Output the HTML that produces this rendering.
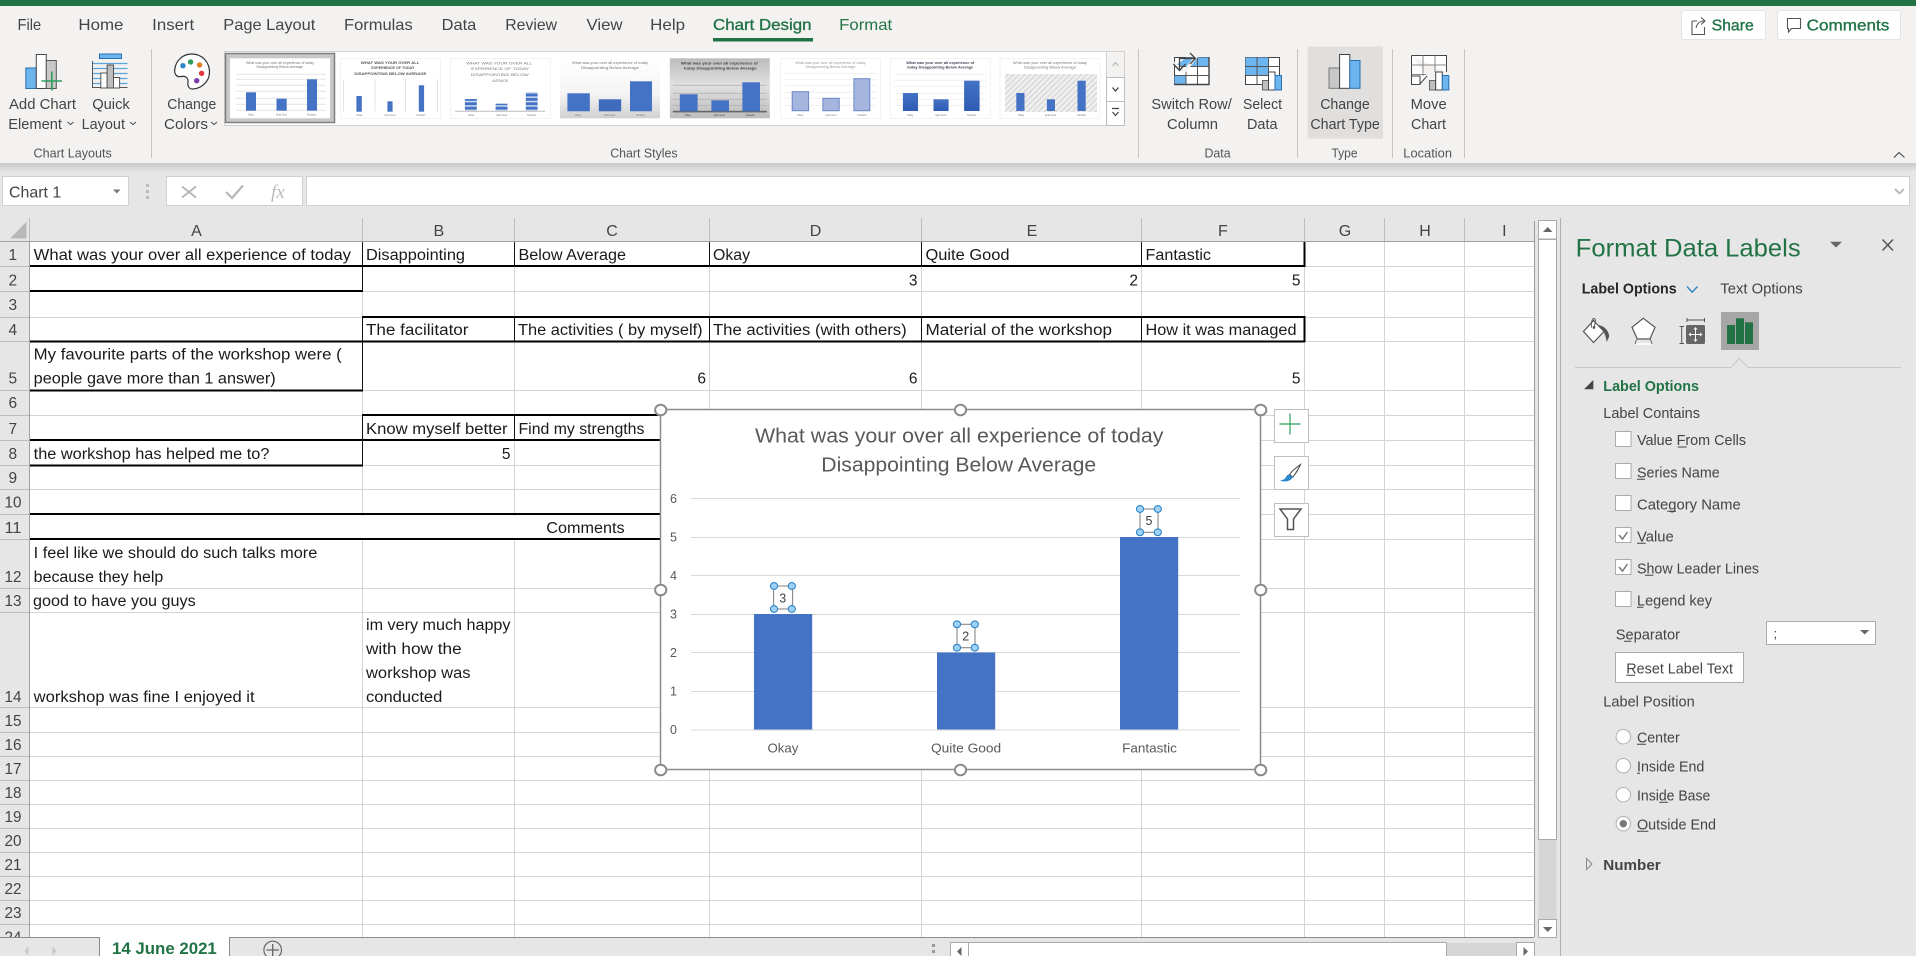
<!DOCTYPE html>
<html lang="en"><head><meta charset="utf-8"><title>Excel</title>
<style>
html,body{margin:0;padding:0;background:#e6e6e6;width:1916px;height:956px;overflow:hidden}
svg{display:block}
text{font-family:"Liberation Sans",sans-serif;white-space:pre}
.c{font-size:15.5px;fill:#1a1a1a}
.n{font-size:15.5px;fill:#444}
.h{font-size:16px;fill:#444;text-anchor:middle}
.t{font-size:16px;fill:#444}
.r{font-size:15px;fill:#444}
.g{font-size:13px;fill:#555}
.p{font-size:15px;fill:#444}
.a{font-size:12.5px;fill:#595959}
.tt{font-size:20.5px;fill:#595959}
.m{font-size:3.6px;fill:#777}
.mb{font-size:3.6px;fill:#555;font-weight:bold}
.x{font-size:3px;fill:#777}
.sb{font-size:16px;fill:#217346;stroke:#217346;stroke-width:.35px}
</style></head>
<body>
<svg xmlns="http://www.w3.org/2000/svg" width="1916" height="956" viewBox="0 0 1916 956">
<defs>
<linearGradient id="sh" x1="0" y1="0" x2="0" y2="1"><stop offset="0" stop-color="#c9c9c9"/><stop offset="1" stop-color="#e6e6e6"/></linearGradient>
<linearGradient id="g4" x1="0" y1="0" x2="0" y2="1"><stop offset="0" stop-color="#fff"/><stop offset="0.6" stop-color="#f4f4f4"/><stop offset="1" stop-color="#d0d0d0"/></linearGradient>
<linearGradient id="g5" x1="0" y1="0" x2="0" y2="1"><stop offset="0" stop-color="#bcbcbc"/><stop offset="0.45" stop-color="#e0e0e0"/><stop offset="1" stop-color="#bdbdbd"/></linearGradient>
<linearGradient id="b7" x1="0" y1="0" x2="0" y2="1"><stop offset="0" stop-color="#4472c4"/><stop offset="1" stop-color="#2f5cb3"/></linearGradient>
<pattern id="hat" width="4" height="4" patternUnits="userSpaceOnUse" patternTransform="rotate(45)"><rect width="4" height="4" fill="#f2f2f2"/><rect width="2" height="4" fill="#dcdcdc"/></pattern>
<pattern id="stp" width="4" height="4.4" patternUnits="userSpaceOnUse"><rect width="4" height="4.4" fill="#4472c4"/><rect y="2.9" width="4" height="1.5" fill="#cfdaf0"/></pattern>
</defs>

<!-- backgrounds -->
<rect width="1916" height="956" fill="#e6e6e6"/>
<rect width="1916" height="163" fill="#f3f2f1"/>
<rect width="1916" height="6" fill="#217346"/>
<rect y="163" width="1916" height="9" fill="url(#sh)"/>

<!-- tabs -->
<text class="t" x="17.5" y="30" textLength="23.7" lengthAdjust="spacingAndGlyphs">File</text>
<text class="t" x="78.4" y="30" textLength="45" lengthAdjust="spacingAndGlyphs">Home</text>
<text class="t" x="152.2" y="30" textLength="42" lengthAdjust="spacingAndGlyphs">Insert</text>
<text class="t" x="223.3" y="30" textLength="92" lengthAdjust="spacingAndGlyphs">Page Layout</text>
<text class="t" x="344" y="30" textLength="68.7" lengthAdjust="spacingAndGlyphs">Formulas</text>
<text class="t" x="441.6" y="30" textLength="34.7" lengthAdjust="spacingAndGlyphs">Data</text>
<text class="t" x="505.3" y="30" textLength="51.7" lengthAdjust="spacingAndGlyphs">Review</text>
<text class="t" x="586.5" y="30" textLength="36" lengthAdjust="spacingAndGlyphs">View</text>
<text class="t" x="650.2" y="30" textLength="34.8" lengthAdjust="spacingAndGlyphs">Help</text>
<text class="sb" x="713" y="30" textLength="98.5" lengthAdjust="spacingAndGlyphs">Chart Design</text>
<rect x="713" y="38" width="100" height="3.5" fill="#217346"/>
<text class="t" x="839.2" y="30" textLength="53" lengthAdjust="spacingAndGlyphs" style="fill:#217346">Format</text>

<!-- share / comments -->
<rect x="1681.5" y="10.5" width="84" height="29" rx="2" fill="#fff" stroke="#e6e4e2"/>
<path d="M1692 21H1697M1692 21V34.5H1704.5V27M1696 28C1697 23.5 1700 21 1704 21M1701 17.5L1705 21L1701 24.5" fill="none" stroke="#555" stroke-width="1.1"/>
<text class="sb" x="1711.6" y="30.5" textLength="42.2" lengthAdjust="spacingAndGlyphs">Share</text>
<rect x="1777.5" y="10.5" width="123" height="29" rx="2" fill="#fff" stroke="#e6e4e2"/>
<path d="M1787.5 18.5H1800.5V28.5H1791.5L1788.5 32V28.5H1787.5Z" fill="none" stroke="#555" stroke-width="1.1"/>
<text class="sb" x="1806.6" y="30.5" textLength="82.7" lengthAdjust="spacingAndGlyphs">Comments</text>

<!-- ribbon separators -->
<path d="M151.5 49V158M1138.5 49V158M1297.5 49V158M1392.5 49V158M1464.5 49V158" stroke="#c8c6c4" fill="none"/>

<!-- Add Chart Element icon -->
<rect x="25.8" y="68" width="10.5" height="20.5" fill="#6db5ee" stroke="#2a6fb0"/>
<rect x="36.3" y="54.5" width="10" height="34" fill="#fff" stroke="#444"/>
<rect x="46.3" y="60.5" width="10" height="28" fill="#c8c8c8" stroke="#555"/>
<path d="M41.5 81H62M51.8 71.5V90.5" stroke="#2f9e5b" stroke-width="1.6" fill="none"/>
<text class="r" x="9" y="109" textLength="67" lengthAdjust="spacingAndGlyphs">Add Chart</text>
<text class="r" x="8.2" y="129" textLength="53.8" lengthAdjust="spacingAndGlyphs">Element</text>
<path d="M67.5 122L70.5 124.5L73.5 122" fill="none" stroke="#555" stroke-width="1.1"/>

<!-- Quick Layout icon -->
<rect x="99.5" y="54" width="22" height="4.5" fill="#6db5ee" stroke="#2a6fb0"/>
<path d="M92.5 63.5H127.5M92.5 68.5H127.5M92.5 73.5H127.5M92.5 78.5H127.5M92.5 83.5H127.5" stroke="#5aa7df" stroke-width="1.2"/>
<path d="M92.5 61V87.5H127.5" fill="none" stroke="#555"/>
<rect x="100.8" y="73" width="6.3" height="15" fill="#fff" stroke="#555"/>
<rect x="107.1" y="65" width="6.4" height="23" fill="#bdbdbd" stroke="#555"/>
<rect x="113.5" y="77.5" width="6.1" height="10.5" fill="#fff" stroke="#555"/>
<text class="r" x="92.2" y="109" textLength="37.6" lengthAdjust="spacingAndGlyphs">Quick</text>
<text class="r" x="81.6" y="129" textLength="43.4" lengthAdjust="spacingAndGlyphs">Layout</text>
<path d="M130 122L133 124.5L136 122" fill="none" stroke="#555" stroke-width="1.1"/>
<text class="g" x="33.5" y="157.5" textLength="78.3" lengthAdjust="spacingAndGlyphs">Chart Layouts</text>

<!-- palette -->
<path d="M192 54C202 54 209.5 62 209.5 72C209.5 82 201 88.5 193 89C188.5 89.2 187.5 85.5 188 82C188.5 77.5 185 75.5 181 76.5C177 77.5 174 74.5 174.8 69C176 61 182 54 192 54Z" fill="#fff" stroke="#333" stroke-width="1.2"/>
<circle cx="182.9" cy="65.7" r="2.7" fill="#2e86c9"/><circle cx="190.6" cy="62" r="2.7" fill="#2f9e5b"/><circle cx="199.6" cy="65" r="2.7" fill="#e67e22"/><circle cx="201.6" cy="73.3" r="2.7" fill="#e0393e"/><circle cx="196.7" cy="80.7" r="2.7" fill="#7b3fa8"/>
<text class="r" x="167.3" y="109" textLength="49" lengthAdjust="spacingAndGlyphs">Change</text>
<text class="r" x="164" y="129" textLength="44" lengthAdjust="spacingAndGlyphs">Colors</text>
<path d="M211 122L214 124.5L217 122" fill="none" stroke="#555" stroke-width="1.1"/>

<!-- gallery -->
<rect x="224.5" y="51.5" width="882" height="74" fill="#fff" stroke="#d2d0ce"/>
<rect x="225.5" y="53.5" width="109" height="69" fill="#c8c8c8" stroke="#7f7f7f" stroke-width="1.5"/>

<!-- thumb 1 -->
<g transform="translate(230 58.3)"><rect width="100" height="60" fill="#fff"/>
<text class="m" x="16" y="5.5" textLength="68" lengthAdjust="spacingAndGlyphs">What was your over all experience of today</text>
<text class="m" x="26.5" y="9.8" textLength="46.5" lengthAdjust="spacingAndGlyphs">Disappointing Below Average</text>
<path d="M6 16H96M6 21H96M6 27H96M6 33H96M6 40H96M6 46H96M6 52H96" stroke="#e2e2e2" stroke-width="1"/>
<rect x="16" y="34" width="10" height="18.4" fill="#4472c4"/><rect x="46.5" y="40.4" width="10.2" height="12" fill="#4472c4"/><rect x="77" y="21" width="10" height="31.4" fill="#4472c4"/>
<text class="x" x="18" y="57" textLength="6" lengthAdjust="spacingAndGlyphs">Okay</text><text class="x" x="46" y="57" textLength="11" lengthAdjust="spacingAndGlyphs">Quite Good</text><text class="x" x="77" y="57" textLength="9" lengthAdjust="spacingAndGlyphs">Fantastic</text></g>
<!-- thumb 2 -->
<g transform="translate(340.4 58.3)"><rect width="100" height="60" fill="#fff" stroke="#e6e6e6" stroke-width=".5"/>
<text class="mb" x="20.4" y="5.5" textLength="58.6" lengthAdjust="spacingAndGlyphs">WHAT WAS YOUR OVER ALL</text>
<text class="mb" x="31" y="10.8" textLength="43" lengthAdjust="spacingAndGlyphs">EXPERIENCE OF TODAY</text>
<text class="mb" x="14" y="16.8" textLength="72" lengthAdjust="spacingAndGlyphs">DISAPPOINTING BELOW AVERAGE</text>
<path d="M3 21V53M34.5 21V53M65 21V53M97 21V53" stroke="#dcdcdc" stroke-width=".8"/>
<rect x="16" y="37.7" width="5.4" height="15.7" fill="#4472c4"/><rect x="47" y="43" width="5.2" height="10.4" fill="#4472c4"/><rect x="78.4" y="27" width="5.3" height="26.4" fill="#4472c4"/>
<text class="x" x="16" y="57.5" textLength="6" lengthAdjust="spacingAndGlyphs">Okay</text><text class="x" x="44" y="57.5" textLength="11" lengthAdjust="spacingAndGlyphs">Quite Good</text><text class="x" x="76" y="57.5" textLength="9" lengthAdjust="spacingAndGlyphs">Fantastic</text></g>
<!-- thumb 3 -->
<g transform="translate(450.2 58.3)"><rect width="100" height="60" fill="#fff" stroke="#e6e6e6" stroke-width=".5"/>
<text class="m" x="16" y="6" textLength="66" lengthAdjust="spacingAndGlyphs">WHAT WAS YOUR OVER ALL</text>
<text class="m" x="21" y="11.7" textLength="58" lengthAdjust="spacingAndGlyphs">EXPERIENCE OF TODAY</text>
<text class="m" x="20.5" y="17.7" textLength="58" lengthAdjust="spacingAndGlyphs">DISAPPOINTING BELOW</text>
<text class="m" x="42" y="23.7" textLength="16" lengthAdjust="spacingAndGlyphs">AVERAGE</text>
<rect x="14.7" y="40.7" width="11.9" height="12" fill="url(#stp)"/><rect x="45.4" y="45.4" width="11.9" height="7.3" fill="url(#stp)"/><rect x="75.6" y="33.7" width="11.8" height="19" fill="url(#stp)"/>
<path d="M5 53H95" stroke="#bbb" stroke-width="1"/>
<text class="x" x="18" y="57.5" textLength="6" lengthAdjust="spacingAndGlyphs">Okay</text><text class="x" x="46" y="57.5" textLength="11" lengthAdjust="spacingAndGlyphs">Quite Good</text><text class="x" x="77" y="57.5" textLength="9" lengthAdjust="spacingAndGlyphs">Fantastic</text></g>
<!-- thumb 4 -->
<g transform="translate(560 58.3)"><rect width="100" height="60" fill="url(#g4)"/>
<text class="m" x="12" y="5.5" textLength="76" lengthAdjust="spacingAndGlyphs">What was your over all experience of today</text>
<text class="m" x="21" y="10.5" textLength="58" lengthAdjust="spacingAndGlyphs">Disappointing Below Average</text>
<rect x="7.4" y="35" width="22.4" height="18" fill="#4472c4"/><rect x="38.8" y="41" width="22.4" height="12" fill="#3f6bbd"/><rect x="70" y="23" width="22" height="30" fill="#4472c4"/>
<text class="x" x="15" y="57.5" textLength="6" lengthAdjust="spacingAndGlyphs">Okay</text><text class="x" x="44" y="57.5" textLength="11" lengthAdjust="spacingAndGlyphs">Quite Good</text><text class="x" x="76" y="57.5" textLength="9" lengthAdjust="spacingAndGlyphs">Fantastic</text></g>
<!-- thumb 5 -->
<g transform="translate(669.8 58.3)"><rect width="100" height="60" fill="url(#g5)"/>
<text class="mb" x="11" y="6" textLength="77" lengthAdjust="spacingAndGlyphs" style="fill:#444">What was your over all experience of</text>
<text class="mb" x="14" y="11" textLength="73" lengthAdjust="spacingAndGlyphs" style="fill:#444">today Disappointing Below Average</text>
<path d="M3 27H97M3 35H97M3 41H97M3 47H97" stroke="#b4b4b4" stroke-width=".8"/>
<rect x="3" y="52.5" width="94" height="1.6" fill="#666"/>
<rect x="10" y="36" width="17.8" height="17" fill="#4472c4"/><rect x="41.6" y="42" width="17.6" height="11" fill="#4472c4"/><rect x="72.6" y="24" width="17.6" height="29" fill="#4472c4"/>
<text class="x" x="15" y="57.5" textLength="6" lengthAdjust="spacingAndGlyphs" style="fill:#444">Okay</text><text class="x" x="44" y="57.5" textLength="11" lengthAdjust="spacingAndGlyphs" style="fill:#444">Quite Good</text><text class="x" x="76" y="57.5" textLength="9" lengthAdjust="spacingAndGlyphs" style="fill:#444">Fantastic</text></g>
<!-- thumb 6 -->
<g transform="translate(780.4 58.3)"><rect width="100" height="60" fill="#fff" stroke="#e6e6e6" stroke-width=".5"/>
<text class="m" x="15" y="5.5" textLength="70" lengthAdjust="spacingAndGlyphs" style="fill:#999">What was your over all experience of today</text>
<text class="m" x="25" y="9.8" textLength="50" lengthAdjust="spacingAndGlyphs" style="fill:#999">Disappointing Below Average</text>
<path d="M4 15H96M4 21H96M4 27H96M4 34H96M4 40H96M4 47H96" stroke="#eee" stroke-width=".8"/>
<rect x="11.8" y="33.4" width="16.4" height="19" fill="#a5b6de" stroke="#6a86c7" stroke-width="1"/><rect x="42.5" y="40" width="16.3" height="12.4" fill="#a5b6de" stroke="#6a86c7" stroke-width="1"/><rect x="73.5" y="20.4" width="15.9" height="32" fill="#a5b6de" stroke="#6a86c7" stroke-width="1"/>
<text class="x" x="17" y="57.5" textLength="6" lengthAdjust="spacingAndGlyphs">Okay</text><text class="x" x="45" y="57.5" textLength="11" lengthAdjust="spacingAndGlyphs">Quite Good</text><text class="x" x="77" y="57.5" textLength="9" lengthAdjust="spacingAndGlyphs">Fantastic</text></g>
<!-- thumb 7 -->
<g transform="translate(890.2 58.3)"><rect width="100" height="60" fill="#fff" stroke="#e6e6e6" stroke-width=".5"/>
<text class="mb" x="16" y="5.5" textLength="68" lengthAdjust="spacingAndGlyphs" style="fill:#445">What was your over all experience of</text>
<text class="mb" x="17" y="10" textLength="66" lengthAdjust="spacingAndGlyphs" style="fill:#445">today Disappointing Below Average</text>
<path d="M4 16H96M4 22H96M4 28H96M4 35H96M4 41H96M4 47H96" stroke="#eee" stroke-width=".8"/>
<rect x="12.7" y="34.7" width="15.1" height="18" fill="url(#b7)"/><rect x="43.3" y="41" width="15.1" height="11.7" fill="url(#b7)"/><rect x="73.9" y="22.4" width="15.5" height="30.3" fill="url(#b7)"/>
<text class="x" x="17" y="57.5" textLength="6" lengthAdjust="spacingAndGlyphs">Okay</text><text class="x" x="45" y="57.5" textLength="11" lengthAdjust="spacingAndGlyphs">Quite Good</text><text class="x" x="77" y="57.5" textLength="9" lengthAdjust="spacingAndGlyphs">Fantastic</text></g>
<!-- thumb 8 -->
<g transform="translate(1000 58.3)"><rect width="100" height="60" fill="#fff" stroke="#e6e6e6" stroke-width=".5"/>
<text class="m" x="13" y="5.5" textLength="74" lengthAdjust="spacingAndGlyphs">What was your over all experience of today</text>
<text class="m" x="24" y="10" textLength="52" lengthAdjust="spacingAndGlyphs">Disappointing Below Average</text>
<rect x="5" y="15.7" width="92" height="38" fill="url(#hat)"/>
<rect x="16.3" y="34.7" width="8.2" height="18" fill="#4472c4"/><rect x="46.9" y="41" width="8.1" height="11.7" fill="#4472c4"/><rect x="77.5" y="22.4" width="8.2" height="30.3" fill="#4472c4"/>
<text class="x" x="18" y="57.5" textLength="6" lengthAdjust="spacingAndGlyphs">Okay</text><text class="x" x="45" y="57.5" textLength="11" lengthAdjust="spacingAndGlyphs">Quite Good</text><text class="x" x="77" y="57.5" textLength="9" lengthAdjust="spacingAndGlyphs">Fantastic</text></g>

<!-- gallery scroll -->
<rect x="1106.5" y="51.5" width="18" height="26" fill="#f3f2f1" stroke="#d2d0ce"/>
<rect x="1106.5" y="77.5" width="18" height="24" fill="#fff" stroke="#bdbdbd"/>
<rect x="1106.5" y="101.5" width="18" height="24" fill="#fff" stroke="#bdbdbd"/>
<path d="M1112.5 66L1115.5 62.5L1118.5 66" fill="none" stroke="#bbb" stroke-width="1.3"/>
<path d="M1112.5 87.5L1115.5 91L1118.5 87.5" fill="none" stroke="#444" stroke-width="1.3"/>
<path d="M1112 108.5H1119M1112.5 112L1115.5 115.5L1118.5 112" fill="none" stroke="#444" stroke-width="1.2"/>
<text class="g" x="610.2" y="157.5" textLength="67.4" lengthAdjust="spacingAndGlyphs">Chart Styles</text>

<!-- switch row/column -->
<rect x="1174.5" y="57.5" width="34.5" height="27" fill="#fff" stroke="#444"/>
<path d="M1186 57.5H1209V66.5H1174.5Z" fill="#6db5ee"/>
<rect x="1174.5" y="75.5" width="11.5" height="9" fill="#6db5ee"/>
<path d="M1174.5 66.5H1209M1174.5 75.5H1209M1186 66.5V84.5M1197.5 57.5V84.5" stroke="#555" fill="none"/>
<path d="M1174.5 84.5H1209V57.5" stroke="#444" fill="none" stroke-width="1.4"/>
<path d="M1172 62L1184 72L1200 52" fill="none" stroke="#f3f2f1" stroke-width="3.2"/>
<path d="M1179.5 70V58.5H1194.5M1190 53L1195.5 58.5L1190 64M1173.5 64L1179.5 70.5L1185.5 64" fill="none" stroke="#444" stroke-width="1.3"/>
<text class="r" x="1151.4" y="109" textLength="80.4" lengthAdjust="spacingAndGlyphs">Switch Row/</text>
<text class="r" x="1167" y="129" textLength="51" lengthAdjust="spacingAndGlyphs">Column</text>

<!-- select data -->
<rect x="1245.5" y="57.5" width="34" height="27" fill="#fff" stroke="#444"/>
<rect x="1245.5" y="57.5" width="23" height="18" fill="#6db5ee"/>
<path d="M1245.5 66.5H1279.5M1245.5 75.5H1279.5M1257 57.5V84.5M1268.5 57.5V84.5" stroke="#555" fill="none"/>
<rect x="1262.5" y="80.5" width="6" height="9.5" fill="#c0c0c0" stroke="#666"/>
<rect x="1268.5" y="72" width="6.5" height="18" fill="#fff" stroke="#444"/>
<rect x="1275" y="75.5" width="6.5" height="14.5" fill="#6db5ee" stroke="#2a6fb0"/>
<text class="r" x="1243" y="109" textLength="39" lengthAdjust="spacingAndGlyphs">Select</text>
<text class="r" x="1247" y="129" textLength="30.5" lengthAdjust="spacingAndGlyphs">Data</text>
<text class="g" x="1204.5" y="157.5" textLength="26.1" lengthAdjust="spacingAndGlyphs">Data</text>

<!-- change chart type -->
<rect x="1307.5" y="46.5" width="75.5" height="92" fill="#e1dfdd"/>
<rect x="1329" y="68" width="10.6" height="20.3" fill="#c8c8c8" stroke="#777"/>
<rect x="1339.6" y="54.5" width="10.2" height="33.8" fill="#fff" stroke="#444"/>
<rect x="1349.8" y="60.5" width="10.2" height="27.8" fill="#6db5ee" stroke="#2a6fb0"/>
<text class="r" x="1320.2" y="109" textLength="49.5" lengthAdjust="spacingAndGlyphs">Change</text>
<text class="r" x="1310.4" y="129" textLength="69.4" lengthAdjust="spacingAndGlyphs">Chart Type</text>
<text class="g" x="1331.5" y="157.5" textLength="26" lengthAdjust="spacingAndGlyphs">Type</text>

<!-- move chart -->
<path d="M1411.5 55.5H1446.5V72M1411.5 55.5V84.5H1419.5L1427 76" fill="#fff" stroke="#444"/>
<path d="M1411.5 65H1446.5M1411.5 74.5H1426M1423 55.5V76M1435 55.5V72" stroke="#888" fill="none"/>
<path d="M1411.5 76H1420V85" fill="none" stroke="#444"/>
<rect x="1429.5" y="80.5" width="6.2" height="9.5" fill="#c0c0c0" stroke="#666"/>
<rect x="1435.7" y="72" width="6.6" height="18" fill="#fff" stroke="#444"/>
<rect x="1442.3" y="75.5" width="6.5" height="14.5" fill="#6db5ee" stroke="#2a6fb0"/>
<text class="r" x="1410.6" y="109" textLength="36.1" lengthAdjust="spacingAndGlyphs">Move</text>
<text class="r" x="1411" y="129" textLength="35" lengthAdjust="spacingAndGlyphs">Chart</text>
<text class="g" x="1403.3" y="157.5" textLength="48.7" lengthAdjust="spacingAndGlyphs">Location</text>
<path d="M1894 157.5L1899 152.5L1904.5 157.5" fill="none" stroke="#444" stroke-width="1.1"/>

<!-- formula bar -->
<rect x="2.5" y="176.5" width="126" height="29" fill="#fff" stroke="#d2d0ce"/>
<text x="9" y="197.3" textLength="52.2" lengthAdjust="spacingAndGlyphs" style="font-size:16px;fill:#444">Chart 1</text>
<path d="M113 189.5H120.5L116.8 193.5Z" fill="#777"/>
<rect x="146" y="184" width="3" height="3" fill="#bbb"/><rect x="146" y="190" width="3" height="3" fill="#bbb"/><rect x="146" y="196" width="3" height="3" fill="#bbb"/>
<rect x="166.5" y="176.5" width="136" height="29" fill="#fff" stroke="#d2d0ce"/>
<path d="M182 186.5L196 197.5M196 186.5L182 197.5" stroke="#b8b8b8" stroke-width="2"/>
<path d="M226 192L232 198L243 185.5" fill="none" stroke="#b8b8b8" stroke-width="2.2"/>
<text x="271" y="198" style="font-family:'Liberation Serif',serif;font-style:italic;font-size:19px;fill:#bbb">fx</text>
<rect x="306.5" y="176.5" width="1603" height="29" fill="#fff" stroke="#d2d0ce"/>
<path d="M1895 189L1899.5 193.5L1904 189" fill="none" stroke="#bbb" stroke-width="2"/>

<!-- column header -->
<path d="M10 238.5L26.5 221.7V238.5Z" fill="#b8b8b8"/>
<path d="M29.5 218V242M362.5 218V242M514.5 218V242M709.5 218V242M921.5 218V242M1141.5 218V242M1304.5 218V242M1384.5 218V242M1464.5 218V242" stroke="#bdbdbd" fill="none"/>
<text class="h" x="196.5" y="236">A</text><text class="h" x="438.8" y="236">B</text><text class="h" x="612" y="236">C</text><text class="h" x="815.5" y="236">D</text><text class="h" x="1032" y="236">E</text><text class="h" x="1222.9" y="236">F</text><text class="h" x="1345" y="236">G</text><text class="h" x="1425" y="236">H</text><text class="h" x="1504.3" y="236">I</text>

<!-- sheet -->
<rect x="30" y="242" width="1504" height="695" fill="#fff"/>
<path d="M0 266.5H30M0 291.5H30M0 317.5H30M0 341.5H30M0 390.5H30M0 415.5H30M0 440.5H30M0 465.5H30M0 489.5H30M0 514.5H30M0 539.5H30M0 588.5H30M0 612.5H30M0 707.5H30M0 732.5H30M0 756.5H30M0 780.5H30M0 804.5H30M0 828.5H30M0 852.5H30M0 876.5H30M0 900.5H30M0 924.5H30" stroke="#bdbdbd" fill="none"/>
<path d="M29.5 242V937M0 241.5H1534" stroke="#a0a0a0" fill="none"/>
<path d="M30 266.5H1534M30 291.5H1534M30 317.5H1534M30 341.5H1534M30 390.5H1534M30 415.5H1534M30 440.5H1534M30 465.5H1534M30 489.5H1534M30 514.5H1534M30 539.5H1534M30 588.5H1534M30 612.5H1534M30 707.5H1534M30 732.5H1534M30 756.5H1534M30 780.5H1534M30 804.5H1534M30 828.5H1534M30 852.5H1534M30 876.5H1534M30 900.5H1534M30 924.5H1534" stroke="#d4d4d4" fill="none"/>
<path d="M362.5 242V937M514.5 242V937M709.5 242V937M921.5 242V937M1141.5 242V937M1304.5 242V937M1384.5 242V937M1464.5 242V937" stroke="#d4d4d4" fill="none"/>
<rect x="31" y="516" width="630" height="22" fill="#fff"/>
<path d="M1534.5 221V937" stroke="#9a9a9a"/>

<!-- heavy borders -->
<path d="M30 266H1305M30 291H363
M362 317H1305M30 341.5H1305M30 390.5H363
M362 415H660M30 440H660M30 465.5H363
M30 514H660M30 539H660
M1304.5 242V267M1304.5 316V342" stroke="#000" stroke-width="2" fill="none"/>
<path d="M362.5 242V291M514.5 242V266M709.5 242V266M921.5 242V266M1141.5 242V266
M362.5 317V391M514.5 317V341M709.5 317V341M921.5 317V341M1141.5 317V341
M362.5 415V466M514.5 415V440" stroke="#111" stroke-width="1" fill="none"/>

<!-- row numbers -->
<text class="n" x="8.5" y="260">1</text><text class="n" x="8.5" y="285.5">2</text><text class="n" x="8.5" y="310">3</text><text class="n" x="8.5" y="335">4</text><text class="n" x="8.5" y="383.5">5</text><text class="n" x="8.5" y="408">6</text><text class="n" x="8.5" y="434">7</text><text class="n" x="8.5" y="459">8</text><text class="n" x="8.5" y="483">9</text>
<text class="n" x="4.5" y="507.5" textLength="17" lengthAdjust="spacingAndGlyphs">10</text>
<text class="n" x="4.5" y="533" textLength="17" lengthAdjust="spacingAndGlyphs">11</text>
<text class="n" x="4.5" y="582" textLength="17" lengthAdjust="spacingAndGlyphs">12</text>
<text class="n" x="4.5" y="606" textLength="17" lengthAdjust="spacingAndGlyphs">13</text>
<text class="n" x="4.5" y="702" textLength="17" lengthAdjust="spacingAndGlyphs">14</text>
<text class="n" x="4.5" y="726" textLength="17" lengthAdjust="spacingAndGlyphs">15</text>
<text class="n" x="4.5" y="750" textLength="17" lengthAdjust="spacingAndGlyphs">16</text>
<text class="n" x="4.5" y="774" textLength="17" lengthAdjust="spacingAndGlyphs">17</text>
<text class="n" x="4.5" y="798" textLength="17" lengthAdjust="spacingAndGlyphs">18</text>
<text class="n" x="4.5" y="822" textLength="17" lengthAdjust="spacingAndGlyphs">19</text>
<text class="n" x="4.5" y="846" textLength="17" lengthAdjust="spacingAndGlyphs">20</text>
<text class="n" x="4.5" y="870" textLength="17" lengthAdjust="spacingAndGlyphs">21</text>
<text class="n" x="4.5" y="894" textLength="17" lengthAdjust="spacingAndGlyphs">22</text>
<text class="n" x="4.5" y="918" textLength="17" lengthAdjust="spacingAndGlyphs">23</text>
<text class="n" x="4.5" y="942.5" textLength="17" lengthAdjust="spacingAndGlyphs">24</text>

<!-- cell text -->
<text class="c" x="33.7" y="260" textLength="317.3" lengthAdjust="spacingAndGlyphs">What was your over all experience of today</text>
<text class="c" x="366" y="260" textLength="99" lengthAdjust="spacingAndGlyphs">Disappointing</text>
<text class="c" x="518.5" y="260" textLength="107.5" lengthAdjust="spacingAndGlyphs">Below Average</text>
<text class="c" x="713" y="260" textLength="37" lengthAdjust="spacingAndGlyphs">Okay</text>
<text class="c" x="925.5" y="260" textLength="84" lengthAdjust="spacingAndGlyphs">Quite Good</text>
<text class="c" x="1145.5" y="260" textLength="65.5" lengthAdjust="spacingAndGlyphs">Fantastic</text>
<text class="c" x="917.5" y="285.5" text-anchor="end">3</text>
<text class="c" x="1138" y="285.5" text-anchor="end">2</text>
<text class="c" x="1300.5" y="285.5" text-anchor="end">5</text>
<text class="c" x="366" y="335" textLength="102.5" lengthAdjust="spacingAndGlyphs">The facilitator</text>
<text class="c" x="518" y="335" textLength="184.6" lengthAdjust="spacingAndGlyphs">The activities ( by myself)</text>
<text class="c" x="713" y="335" textLength="193.7" lengthAdjust="spacingAndGlyphs">The activities (with others)</text>
<text class="c" x="925.5" y="335" textLength="186.5" lengthAdjust="spacingAndGlyphs">Material of the workshop</text>
<text class="c" x="1145.5" y="335" textLength="151" lengthAdjust="spacingAndGlyphs">How it was managed</text>
<text class="c" x="33.7" y="359.5" textLength="308" lengthAdjust="spacingAndGlyphs">My favourite parts of the workshop were (</text>
<text class="c" x="33.7" y="383.5" textLength="242" lengthAdjust="spacingAndGlyphs">people gave more than 1 answer)</text>
<text class="c" x="706" y="383.5" text-anchor="end">6</text>
<text class="c" x="917.5" y="383.5" text-anchor="end">6</text>
<text class="c" x="1300.5" y="383.5" text-anchor="end">5</text>
<text class="c" x="366" y="434" textLength="141.6" lengthAdjust="spacingAndGlyphs">Know myself better</text>
<text class="c" x="518.5" y="434" textLength="125.9" lengthAdjust="spacingAndGlyphs">Find my strengths</text>
<text class="c" x="33.7" y="459" textLength="235.7" lengthAdjust="spacingAndGlyphs">the workshop has helped me to?</text>
<text class="c" x="510.5" y="459" text-anchor="end">5</text>
<text class="c" x="546.3" y="533" textLength="78.3" lengthAdjust="spacingAndGlyphs">Comments</text>
<text class="c" x="33.7" y="558" textLength="283.6" lengthAdjust="spacingAndGlyphs">I feel like we should do such talks more</text>
<text class="c" x="33.7" y="582" textLength="129.6" lengthAdjust="spacingAndGlyphs">because they help</text>
<text class="c" x="33" y="606" textLength="162.7" lengthAdjust="spacingAndGlyphs">good to have you guys</text>
<text class="c" x="366" y="630" textLength="144.5" lengthAdjust="spacingAndGlyphs">im very much happy</text>
<text class="c" x="366" y="654" textLength="95.7" lengthAdjust="spacingAndGlyphs">with how the</text>
<text class="c" x="366" y="678" textLength="104.5" lengthAdjust="spacingAndGlyphs">workshop was</text>
<text class="c" x="366" y="702" textLength="76.3" lengthAdjust="spacingAndGlyphs">conducted</text>
<text class="c" x="33.7" y="702" textLength="220.9" lengthAdjust="spacingAndGlyphs">workshop was fine I enjoyed it</text>

<!-- chart -->
<rect x="660.5" y="409.5" width="600" height="360" fill="#fff" stroke="#8c8c8c" stroke-width="1.5"/>
<text class="tt" x="755" y="442.7" textLength="408.4" lengthAdjust="spacingAndGlyphs">What was your over all experience of today</text>
<text class="tt" x="821.3" y="471.7" textLength="274.9" lengthAdjust="spacingAndGlyphs">Disappointing Below Average</text>
<path d="M691 498.5H1240.5M691 537.5H1240.5M691 575.5H1240.5M691 614.5H1240.5M691 652.5H1240.5M691 691.5H1240.5M691 730H1240.5" stroke="#d9d9d9" fill="none"/>
<text class="a" x="673.5" y="503" text-anchor="middle">6</text><text class="a" x="673.5" y="541.5" text-anchor="middle">5</text><text class="a" x="673.5" y="580" text-anchor="middle">4</text><text class="a" x="673.5" y="618.5" text-anchor="middle">3</text><text class="a" x="673.5" y="657" text-anchor="middle">2</text><text class="a" x="673.5" y="695.5" text-anchor="middle">1</text><text class="a" x="673.5" y="734" text-anchor="middle">0</text>
<rect x="754" y="614" width="58.2" height="115.5" fill="#4472c4"/>
<rect x="937" y="652.5" width="58.2" height="77" fill="#4472c4"/>
<rect x="1120" y="537" width="58.2" height="192.5" fill="#4472c4"/>
<text class="a" x="767.5" y="752.7" textLength="30.8" lengthAdjust="spacingAndGlyphs">Okay</text>
<text class="a" x="931" y="752.7" textLength="70.2" lengthAdjust="spacingAndGlyphs">Quite Good</text>
<text class="a" x="1122.2" y="752.7" textLength="54.7" lengthAdjust="spacingAndGlyphs">Fantastic</text>

<!-- data labels -->
<g fill="#9fd0f5" stroke="#2e86c9" stroke-width="1.1">
<rect x="773.6" y="586" width="19" height="23" fill="#fff" stroke="#888"/>
<rect x="957" y="624.3" width="18" height="23.4" fill="#fff" stroke="#888"/>
<rect x="1140" y="509" width="18" height="23.3" fill="#fff" stroke="#888"/>
<ellipse cx="774" cy="586" rx="3.6" ry="3.4"/><ellipse cx="791.8" cy="586" rx="3.6" ry="3.4"/><ellipse cx="774" cy="609" rx="3.6" ry="3.4"/><ellipse cx="791.8" cy="609" rx="3.6" ry="3.4"/>
<ellipse cx="957" cy="624.3" rx="3.6" ry="3.4"/><ellipse cx="974.8" cy="624.3" rx="3.6" ry="3.4"/><ellipse cx="957" cy="647.7" rx="3.6" ry="3.4"/><ellipse cx="974.8" cy="647.7" rx="3.6" ry="3.4"/>
<ellipse cx="1140" cy="509" rx="3.6" ry="3.4"/><ellipse cx="1157.8" cy="509" rx="3.6" ry="3.4"/><ellipse cx="1140" cy="532.3" rx="3.6" ry="3.4"/><ellipse cx="1157.8" cy="532.3" rx="3.6" ry="3.4"/>
</g>
<text class="a" x="782.7" y="602.3" text-anchor="middle" style="fill:#404040">3</text>
<text class="a" x="965.7" y="640.7" text-anchor="middle" style="fill:#404040">2</text>
<text class="a" x="1149" y="525" text-anchor="middle" style="fill:#404040">5</text>

<!-- chart handles -->
<g fill="#fff" stroke="#8c8c8c" stroke-width="2">
<ellipse cx="660.7" cy="410" rx="5.6" ry="5.3"/><ellipse cx="960.5" cy="410" rx="5.6" ry="5.3"/><ellipse cx="1260.7" cy="410" rx="5.6" ry="5.3"/>
<ellipse cx="660.7" cy="590" rx="5.6" ry="5.3"/><ellipse cx="1260.7" cy="590" rx="5.6" ry="5.3"/>
<ellipse cx="660.7" cy="770" rx="5.6" ry="5.3"/><ellipse cx="960.5" cy="770" rx="5.6" ry="5.3"/><ellipse cx="1260.7" cy="770" rx="5.6" ry="5.3"/>
</g>

<!-- chart side buttons -->
<rect x="1274.5" y="409.5" width="34" height="33" fill="#fff" stroke="#bfbfbf"/>
<rect x="1274.5" y="456.5" width="34" height="33" fill="#fff" stroke="#bfbfbf"/>
<rect x="1274.5" y="503.5" width="34" height="33" fill="#fff" stroke="#bfbfbf"/>
<path d="M1279.5 424H1300.5M1290 413.5V434.5" stroke="#2f9e5b" stroke-width="1.2" fill="none"/>
<path d="M1300.5 464.5C1297 467 1292 471 1289.5 474.5L1293 477C1296 473 1299 468 1300.5 464.5Z" fill="#fff" stroke="#444"/>
<path d="M1289 474.5C1286 475 1286 478 1284.5 479C1282.5 480 1281 480.3 1280 480.5C1283 482 1289 482 1292 478.5L1293 477Z" fill="#2e86c9"/>
<path d="M1280 509H1301L1293.5 519V529.5H1287.5V519Z" fill="#fff" stroke="#555" stroke-width="1.5"/>

<!-- tab bar -->
<rect x="0" y="937" width="1534" height="19" fill="#e6e6e6"/>
<path d="M0 937.5H1534" stroke="#8c8c8c"/>
<rect x="99.5" y="937" width="130" height="20" fill="#fff"/>
<path d="M99.5 937V956M229.5 937V956" stroke="#8c8c8c"/>
<text x="112" y="954" textLength="104.8" lengthAdjust="spacingAndGlyphs" style="font-size:16.5px;font-weight:bold;fill:#217346">14 June 2021</text>
<circle cx="272.7" cy="950" r="8.8" fill="none" stroke="#666" stroke-width="1.2"/>
<path d="M266.5 950H279M272.7 944V956" stroke="#666" stroke-width="1.3"/>
<path d="M28.5 946.5L24.5 951L28.5 955.5Z" fill="#c8c8c8"/><path d="M52.5 946.5L56.5 951L52.5 955.5Z" fill="#c8c8c8"/>
<rect x="932" y="944" width="3" height="3" fill="#999"/><rect x="932" y="950" width="3" height="3" fill="#999"/>

<!-- horizontal scroll -->
<rect x="950.5" y="942.5" width="18" height="14" fill="#fff" stroke="#aaa"/>
<path d="M961.5 947V956L957 951.5Z" fill="#666"/>
<rect x="968.5" y="942.5" width="478" height="14" fill="#fff" stroke="#aaa"/>
<rect x="1447" y="943" width="70" height="13" fill="#d6d6d6"/>
<rect x="1516.5" y="942.5" width="18" height="14" fill="#fff" stroke="#aaa"/>
<path d="M1523.5 947V956L1528 951.5Z" fill="#666"/>

<!-- vertical scroll -->
<rect x="1538.5" y="239" width="18" height="680" fill="#d6d6d6"/>
<rect x="1538.5" y="220.5" width="18" height="18.5" fill="#fff" stroke="#aaa"/>
<path d="M1543 232H1552.5L1547.7 227Z" fill="#666"/>
<rect x="1538.5" y="239.5" width="18" height="600" fill="#fff" stroke="#aaa"/>
<rect x="1538.5" y="919.5" width="18" height="18" fill="#fff" stroke="#aaa"/>
<path d="M1543 927H1552.5L1547.7 932Z" fill="#666"/>
<path d="M1560.5 218V956" stroke="#b0b0b0"/>

<!-- format panel -->
<text x="1575.7" y="256.7" textLength="225" lengthAdjust="spacingAndGlyphs" style="font-size:25px;fill:#217346">Format Data Labels</text>
<path d="M1830 241.7H1842L1836 247.5Z" fill="#666"/>
<path d="M1882.5 239.5L1893 250.5M1893 239.5L1882.5 250.5" stroke="#555" stroke-width="1.5"/>
<text class="p" x="1581.7" y="293.3" textLength="95" lengthAdjust="spacingAndGlyphs" style="font-weight:bold;fill:#262626">Label Options</text>
<path d="M1687 286.5L1692.2 292.2L1697.5 286.5" fill="none" stroke="#2e86c9" stroke-width="1.4"/>
<text class="p" x="1720.3" y="293.3" textLength="82.4" lengthAdjust="spacingAndGlyphs">Text Options</text>

<!-- fill icon -->
<path d="M1593.5 320.5L1604 331.5L1593.5 342.5L1583.5 331.5Z" fill="#fff" stroke="#555" stroke-width="1.2"/>
<path d="M1598.5 325C1604 326 1608 329.5 1609.3 336C1608.5 338 1608 340 1606.5 342C1606.5 338 1605 335 1603.5 331.5Z" fill="#555"/>
<path d="M1591.5 327.5C1591 323 1592 318.5 1594 318.5C1596 318.5 1595.5 323 1594 327.5" fill="none" stroke="#555"/>
<circle cx="1594" cy="327.5" r="1.4" fill="#555"/>
<!-- pentagon icon -->
<path d="M1643.3 318.3L1655 327.3L1650 339H1637.3L1632 327.3Z" fill="#fff" stroke="#555" stroke-width="1.2"/>
<path d="M1636.5 339.5L1635 344M1650.5 339.5L1652 344" stroke="#666"/>
<path d="M1636 344H1651" stroke="#fff" stroke-width="1.5"/>
<!-- size icon -->
<path d="M1687 318V322M1687 320H1704.5M1704.5 318V322M1681.7 326.5V343.5M1679.5 326.5H1684M1679.5 343.5H1684" stroke="#555" fill="none"/>
<rect x="1686" y="325" width="19" height="19" rx="1.5" fill="#666"/>
<path d="M1695.5 328V341M1689.5 334.5H1701.5" stroke="#fff"/>
<path d="M1695.5 327L1693.5 329.5H1697.5ZM1695.5 342L1693.5 339.5H1697.5ZM1688.5 334.5L1691 332.5V336.5ZM1702.5 334.5L1700 332.5V336.5Z" fill="#fff"/>
<!-- active tile -->
<rect x="1721" y="312" width="38" height="38" fill="#a6a6a6"/>
<rect x="1727" y="325" width="8" height="19" fill="#217346"/><rect x="1736" y="318.3" width="8" height="25.7" fill="#217346"/><rect x="1745" y="322.3" width="8" height="21.7" fill="#217346"/>
<path d="M1575 367.5H1731L1739.3 358.5L1748 367.5H1901" fill="none" stroke="#c8c8c8"/>

<path d="M1593.3 380V389.3H1584Z" fill="#444"/>
<text class="p" x="1603.3" y="391" textLength="95.7" lengthAdjust="spacingAndGlyphs" style="font-weight:bold;fill:#217346">Label Options</text>
<text class="p" x="1603.3" y="418" textLength="96.7" lengthAdjust="spacingAndGlyphs">Label Contains</text>

<g fill="#fff" stroke="#ababab">
<rect x="1615.5" y="431.5" width="15.5" height="15"/><rect x="1615.5" y="463.5" width="15.5" height="15"/><rect x="1615.5" y="495.5" width="15.5" height="15"/><rect x="1615.5" y="527.5" width="15.5" height="15"/><rect x="1615.5" y="559.5" width="15.5" height="15"/><rect x="1615.5" y="591.5" width="15.5" height="15"/>
</g>
<path d="M1619 535L1622.5 539L1627.5 532M1619 567L1622.5 571L1627.5 564" fill="none" stroke="#777" stroke-width="1.5"/>
<text class="p" x="1637" y="445" textLength="109" lengthAdjust="spacingAndGlyphs">Value From Cells</text>
<text class="p" x="1637" y="477.3" textLength="82.7" lengthAdjust="spacingAndGlyphs">Series Name</text>
<text class="p" x="1637" y="509.3" textLength="103.7" lengthAdjust="spacingAndGlyphs">Category Name</text>
<text class="p" x="1637" y="541.3" textLength="36.7" lengthAdjust="spacingAndGlyphs">Value</text>
<text class="p" x="1637" y="573.3" textLength="122" lengthAdjust="spacingAndGlyphs">Show Leader Lines</text>
<text class="p" x="1637" y="605.3" textLength="75" lengthAdjust="spacingAndGlyphs">Legend key</text>
<text class="p" x="1615.7" y="639.3" textLength="64.3" lengthAdjust="spacingAndGlyphs">Separator</text>
<rect x="1766.5" y="621.5" width="109" height="23" fill="#fff" stroke="#ababab"/>
<text class="p" x="1773.5" y="638" style="font-size:13px">;</text>
<path d="M1860 630H1869.3L1864.7 634.5Z" fill="#666"/>
<rect x="1615.5" y="652.5" width="128" height="30" fill="#fff" stroke="#ababab"/>
<text class="p" x="1626.3" y="673.3" textLength="106.7" lengthAdjust="spacingAndGlyphs">Reset Label Text</text>
<text class="p" x="1603.3" y="706.3" textLength="91.4" lengthAdjust="spacingAndGlyphs">Label Position</text>
<g fill="#fff" stroke="#b0b0b0"><circle cx="1623.3" cy="736.7" r="7.2"/><circle cx="1623.3" cy="765.7" r="7.2"/><circle cx="1623.3" cy="794.7" r="7.2"/><circle cx="1623.3" cy="823.7" r="7.2"/></g>
<circle cx="1623.3" cy="823.7" r="3.7" fill="#777"/>
<text class="p" x="1637" y="742.3" textLength="42.7" lengthAdjust="spacingAndGlyphs">Center</text>
<text class="p" x="1637" y="771.3" textLength="67.3" lengthAdjust="spacingAndGlyphs">Inside End</text>
<text class="p" x="1637" y="800.3" textLength="73.3" lengthAdjust="spacingAndGlyphs">Inside Base</text>
<text class="p" x="1637" y="829.3" textLength="79" lengthAdjust="spacingAndGlyphs">Outside End</text>
<path d="M1677.7 447H1686.7M1637 479.3H1645M1667.3 511.3H1676M1637 543.3H1645.7M1645 575.3H1653.3M1637 607.3H1643.3M1624 641.3H1631.3M1626.3 675.3H1635M1637 744.3H1646M1637 773.3H1640M1659.3 802.3H1668M1637 831.3H1648.3" stroke="#444" fill="none"/>
<path d="M1586.5 858.5L1592 864L1586.5 869.5Z" fill="none" stroke="#888"/>
<text class="p" x="1603.3" y="870" textLength="57.4" lengthAdjust="spacingAndGlyphs" style="font-weight:bold">Number</text>
</svg>
</body></html>
